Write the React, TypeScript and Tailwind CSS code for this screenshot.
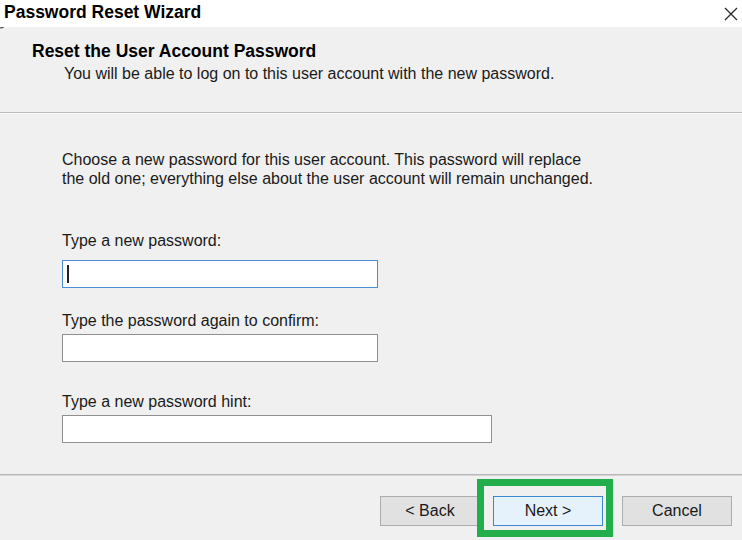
import React from 'react';

// Password Reset Wizard – a classic Windows wizard page

const FONT = "font-['Liberation_Sans',Arial,sans-serif]";

const Field = ({ label, width, focused, labelGap, inputGap }: { label: string; width: string; focused?: boolean; labelGap: string; inputGap: string }) => (
  <div className={labelGap}>
    <div className="text-[16px] leading-[19px] whitespace-nowrap">{label}</div>
    <div
      className={`${inputGap} ${width} h-[28px] bg-white border flex items-center pl-[4px] ${focused ? 'border-[#4a8fd6]' : 'border-[#8f8f8f]'}`}
    >
      {focused && <span className="block w-[2px] h-[18px] bg-[#222]" />}
    </div>
  </div>
);

const WizardButton = ({ children, primary, width }: { children: React.ReactNode; primary?: boolean; width: string }) => (
  <button
    type="button"
    className={`${width} h-[30px] text-[16px] leading-none text-[#1a1a1a] border flex items-center justify-center ${primary ? 'bg-[#e5f1fb] border-[#3d86d0]' : 'bg-[#e1e1e1] border-[#adadad]'}`}
  >
    {children}
  </button>
);

export default function App() {
  return (
    <div className={`relative w-[742px] h-[540px] overflow-hidden bg-[#f0f0f0] text-[#1a1a1a] flex flex-col ${FONT}`}>
      {/* title bar */}
      <div className="h-[27px] bg-white flex items-start justify-between shrink-0">
        <span className="pl-[4px] pt-[2px] text-[17.5px] leading-[20px] font-bold text-black whitespace-nowrap">Password Reset Wizard</span>
        <svg className="mt-[7px] mr-[4px]" width="14" height="14" viewBox="0 0 14 14">
          <path d="M1 1 L13 13 M13 1 L1 13" stroke="#2b2b2b" strokeWidth="1.3" fill="none" />
        </svg>
      </div>

      {/* little window edge mark */}
      <svg className="absolute left-0 top-[27px]" width="4" height="5" viewBox="0 0 4 5">
        <path d="M0 1 L3.5 0.5" stroke="#333" strokeWidth="1.2" />
      </svg>

      {/* header */}
      <div className="h-[85px] shrink-0 pt-[14px] pl-[32px]">
        <h1 className="text-[17.5px] leading-[20px] font-bold text-black whitespace-nowrap">Reset the User Account Password</h1>
        <p className="mt-[3px] pl-[32px] text-[16px] leading-[20px] whitespace-nowrap">
          You will be able to log on to this user account with the new password.
        </p>
      </div>
      <div className="h-px bg-[#bdbdbd] shrink-0" />
      <div className="h-px bg-[#fafafa] shrink-0" />

      {/* body */}
      <div className="h-[360px] shrink-0 pl-[62px] pt-[36px]">
        <p className="text-[16px] leading-[19px] whitespace-nowrap">
          Choose a new password for this user account. This password will replace
          <br />
          the old one; everything else about the user account will remain unchanged.
        </p>
        <Field label="Type a new password:" width="w-[316px]" focused labelGap="mt-[43px]" inputGap="mt-[10px]" />
        <Field label="Type the password again to confirm:" width="w-[316px]" labelGap="mt-[23px]" inputGap="mt-[4px]" />
        <Field label="Type a new password hint:" width="w-[430px]" labelGap="mt-[30px]" inputGap="mt-[4px]" />
      </div>
      <div className="h-px bg-[#b9b9b9] shrink-0" />
      <div className="h-px bg-[#d4d4d4] shrink-0" />

      {/* footer */}
      <div className="flex-1 flex items-start justify-end pt-[20px] pr-[10px] gap-[13px]">
        <WizardButton width="w-[100px]">&lt; Back</WizardButton>
        <WizardButton width="w-[110px]" primary>Next &gt;</WizardButton>
        <div className="ml-[6px]">
          <WizardButton width="w-[110px]">Cancel</WizardButton>
        </div>
      </div>

      {/* green highlight drawn over the Next button */}
      <div className="absolute left-[477px] top-[479px] w-[136px] h-[58px] border-[7px] border-[#22ae4a] pointer-events-none" />
    </div>
  );
}
